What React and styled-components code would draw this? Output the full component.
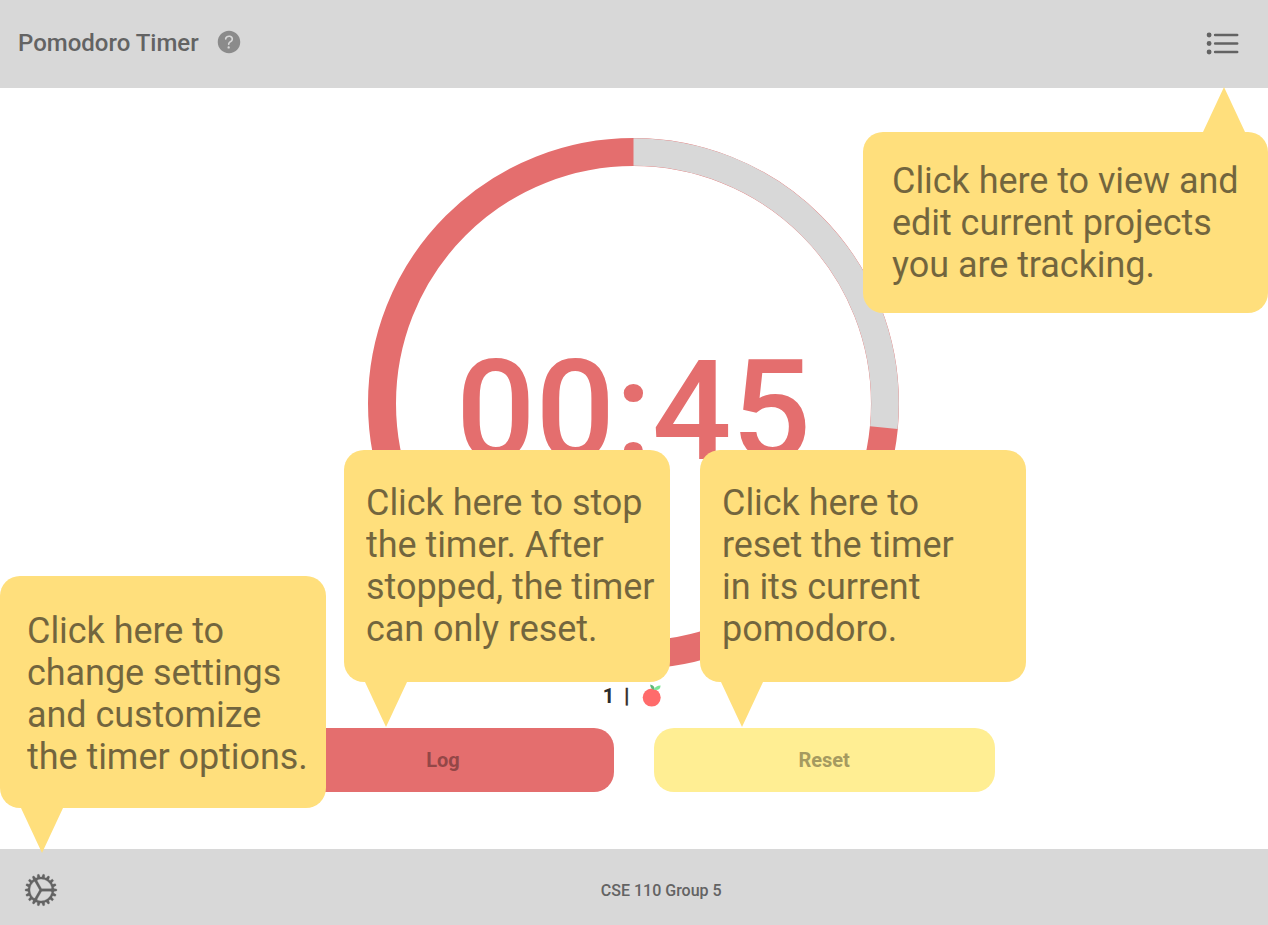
import React from "react";
import styled, { createGlobalStyle } from "styled-components";
import { IoListOutline, IoCogOutline, IoHelpCircle } from "react-icons/io5";

const GlobalStyle = createGlobalStyle`
  *, *::before, *::after { box-sizing: border-box; }
  body { margin: 0; background: #fff; font-family: Roboto, "Liberation Sans", sans-serif; }
  button { font-family: inherit; border: 0; cursor: pointer; }
`;

const Page = styled.div`
  position: relative;
  display: flex;
  flex-direction: column;
  width: 100%;
  height: 100vh;
  overflow: hidden;
`;

const Header = styled.header`
  display: flex;
  align-items: center;
  justify-content: space-between;
  height: 88px;
  padding: 0 26px 2px 18px;
  background: #d8d8d8;
  color: #636363;
`;

const Brand = styled.div`
  display: flex;
  align-items: center;
  gap: 15px;
`;

const Title = styled.h1`
  margin: 0;
  font-size: 24px;
  font-weight: 500;
  line-height: 28px;
`;

const IconButton = styled.button`
  display: flex;
  padding: 0;
  background: none;
  color: ${(p) => p.$color || "#636363"};
`;

const HelpButton = styled(IconButton)`
  margin-bottom: 2px;
`;

const ProjectsButton = styled(IconButton)`
  path, line { stroke-width: 35px; }
`;

const SettingsButton = styled(IconButton)`
  transform: translate(-0.5px, -0.5px);
  path { stroke-width: 4px; }
`;

const Main = styled.main`
  flex: 1;
  display: flex;
  flex-direction: column;
  align-items: center;
  padding-top: 50px;
`;

const Dial = styled.div`
  display: grid;
  place-items: center;
  width: 531px;
  height: 531px;
  margin-right: 1px;
  > * { grid-area: 1 / 1; }
`;

const Time = styled.div`
  padding-top: 15px;
  color: #e46e6e;
  font-size: 140px;
  font-weight: 500;
  line-height: 164px;
`;

const Sessions = styled.div`
  display: flex;
  align-items: center;
  height: 24px;
  margin: 15px 3px 0 0;
  color: #2b2b2b;
  font-size: 20px;
  font-weight: 700;
  line-height: 24px;
`;

const Divider = styled.span`
  margin: 0 13px 0 10px;
  -webkit-text-stroke: 0.4px currentColor;
`;

const Actions = styled.div`
  display: flex;
  gap: 40px;
  margin-top: 20px;
`;

const Action = styled.button`
  width: 341px;
  height: 64px;
  padding: 0 1px 0 0;
  border-radius: 20px;
  background: ${(p) => p.$bg};
  color: ${(p) => p.$fg};
  font-size: 20px;
  font-weight: 700;
  letter-spacing: -0.05px;
`;

const Footer = styled.footer`
  display: grid;
  grid-template-columns: 61px 1fr;
  align-items: center;
  height: 76px;
  padding: 6px 28px 0 21.5px;
  background: #d8d8d8;
  color: #636363;
`;

const Credit = styled.span`
  justify-self: center;
  padding-top: 2px;
  font-size: 16px;
  font-weight: 500;
  line-height: 20px;
`;

const Bubble = styled.div`
  position: absolute;
  left: ${(p) => p.$x}px;
  top: ${(p) => p.$y}px;
  width: ${(p) => p.$w}px;
  height: ${(p) => p.$h}px;
  padding: ${(p) => p.$pad};
  border-radius: 20px;
  background: #ffdf7c;

  &::after {
    content: "";
    position: absolute;
    left: ${(p) => p.$tip}px;
    ${(p) => (p.$up ? "bottom: 100%;" : "top: 100%;")}
    width: 42px;
    height: 45px;
    background: inherit;
    clip-path: ${(p) =>
      p.$up ? "polygon(50% 0, 100% 100%, 0 100%)" : "polygon(0 0, 100% 0, 50% 100%)"};
  }
`;

const Hint = styled.p`
  margin: 0;
  color: #151515;
  opacity: 0.6;
  font-size: 36px;
  line-height: 42px;
  letter-spacing: -0.05px;
  white-space: pre;
`;

const RADIUS = 251.5;
const CIRCUMFERENCE = 2 * Math.PI * RADIUS;

function Ring({ elapsed }) {
  return (
    <svg width="531" height="531" viewBox="0 0 531 531" fill="none">
      <circle cx="265.5" cy="265.5" r={RADIUS} stroke="#e46e6e" strokeWidth="28" />
      <circle
        cx="265.5"
        cy="265.5"
        r={RADIUS}
        stroke="#d8d8d8"
        strokeWidth="27.6"
        strokeDasharray={`${CIRCUMFERENCE * elapsed} ${CIRCUMFERENCE}`}
        transform="rotate(-90 265.5 265.5)"
      />
    </svg>
  );
}

function Tomato() {
  return (
    <svg width="20" height="24" viewBox="0 0 20 24">
      <circle cx="9.7" cy="13.6" r="9" fill="#ff6b6b" />
      <path d="M8.2 0.4C11.6 1 13 3 12.4 5.8C9.7 5.4 8.2 3.4 8.2 0.4Z" fill="#5fb878" />
      <path d="M18.6 1.4C18.5 4.8 16 6.8 11.8 5.8C12.5 3 15.2 1.4 18.6 1.4Z" fill="#7be495" />
    </svg>
  );
}

export default function App() {
  return (
    <Page>
      <GlobalStyle />
      <Header>
        <Brand>
          <Title>Pomodoro Timer</Title>
          <HelpButton $color="#8b8b8b" aria-label="Help">
            <IoHelpCircle size={30} />
          </HelpButton>
        </Brand>
        <ProjectsButton aria-label="Projects">
          <IoListOutline size={39} />
        </ProjectsButton>
      </Header>
      <Main>
        <Dial>
          <Ring elapsed={0.2652} />
          <Time>00:45</Time>
        </Dial>
        <Sessions>
          <span>1</span>
          <Divider>|</Divider>
          <Tomato />
        </Sessions>
        <Actions>
          <Action $bg="#e46e6e" $fg="#934747">Log</Action>
          <Action $bg="#ffee93" $fg="#a59a60">Reset</Action>
        </Actions>
      </Main>
      <Footer>
        <SettingsButton aria-label="Settings">
          <IoCogOutline size={39} />
        </SettingsButton>
        <Credit>CSE 110 Group 5</Credit>
      </Footer>
      <Bubble $x={863} $y={132} $w={405} $h={181} $pad="28px 0 0 29px" $tip={340} $up>
        <Hint>{"Click here to view and\nedit current projects\nyou are tracking."}</Hint>
      </Bubble>
      <Bubble $x={344} $y={450} $w={326} $h={232} $pad="32px 0 0 22px" $tip={21}>
        <Hint>{"Click here to stop\nthe timer. After\nstopped, the timer\ncan only reset."}</Hint>
      </Bubble>
      <Bubble $x={700} $y={450} $w={326} $h={232} $pad="32px 0 0 22px" $tip={21}>
        <Hint>{"Click here to\nreset the timer\nin its current\npomodoro."}</Hint>
      </Bubble>
      <Bubble $x={0} $y={576} $w={326} $h={232} $pad="34px 0 0 27px" $tip={21}>
        <Hint>{"Click here to\nchange settings\nand customize\nthe timer options."}</Hint>
      </Bubble>
    </Page>
  );
}
